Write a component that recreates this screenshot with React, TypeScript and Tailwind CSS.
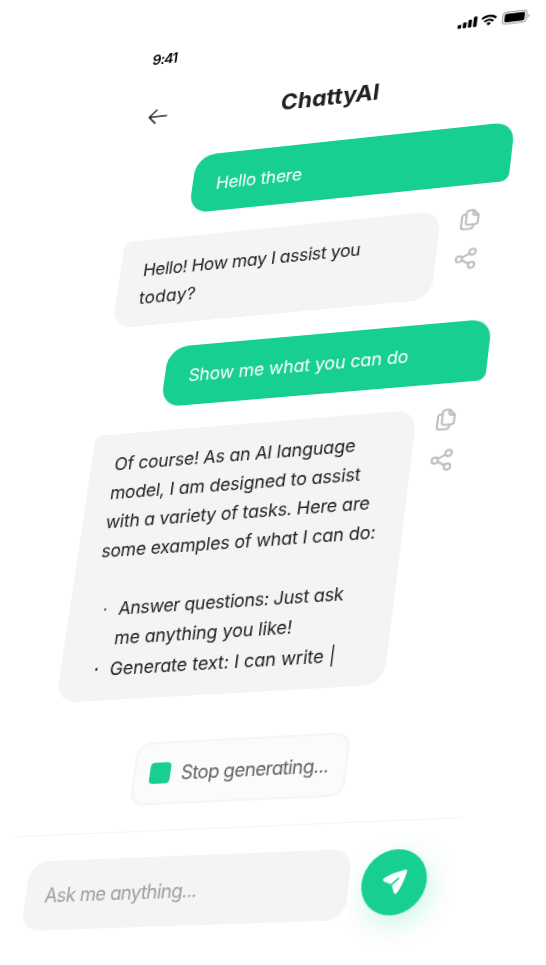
import { useLayoutEffect, useRef, useState, type ReactNode } from "react";

type Point = [number, number];

// Rectangle of the flat screen and the four points it is projected onto.
const AREA = { x: 24, y: 136, w: 380, h: 678 };
const QUAD: [Point, Point, Point, Point] = [
  [136.9, 162],
  [515.3, 121.4],
  [433.9, 819.4],
  [35.6, 836.4],
];

function projection(): string {
  const [[x0, y0], [x1, y1], [x2, y2], [x3, y3]] = QUAD;
  const dx1 = x1 - x2, dx2 = x3 - x2, dx3 = x0 - x1 + x2 - x3;
  const dy1 = y1 - y2, dy2 = y3 - y2, dy3 = y0 - y1 + y2 - y3;
  const den = dx1 * dy2 - dx2 * dy1;
  const g = (dx3 * dy2 - dx2 * dy3) / den;
  const h = (dx1 * dy3 - dx3 * dy1) / den;
  const m = [
    x1 - x0 + g * x1, y1 - y0 + g * y1, 0, g,
    x3 - x0 + h * x3, y3 - y0 + h * y3, 0, h,
    0, 0, 1, 0,
    x0, y0, 0, 1,
  ];
  return `matrix3d(${m.map((n) => n.toFixed(8)).join(",")}) scale(${1 / AREA.w}, ${1 / AREA.h}) translate(${-AREA.x}px, ${-AREA.y}px)`;
}

// One line of text whose tracking is set so that it fills the given width.
function Line({ width, className = "", children }: { width: number; className?: string; children: string }) {
  const ref = useRef<HTMLSpanElement>(null);
  const [spacing, setSpacing] = useState(0);
  useLayoutEffect(() => {
    if (ref.current) setSpacing((width - ref.current.offsetWidth) / children.length);
  }, [width, children]);
  return (
    <span className={`block w-max whitespace-pre ${className}`}>
      <span ref={ref} style={{ letterSpacing: spacing }}>{children}</span>
    </span>
  );
}

function CopyIcon() {
  return (
    <svg className="size-6" viewBox="0 0 24 24" fill="none" stroke="#bdbdbd" strokeWidth="2" strokeLinejoin="round" strokeLinecap="round">
      <path d="M13.500 2.500h-3.500a2.800 2.800 0 0 0-2.800 2.800v9.200a2.800 2.800 0 0 0 2.800 2.800h6a2.800 2.800 0 0 0 2.800-2.800V7.800z" />
      <path d="M13.500 2.700v3a2 2 0 0 0 2 2h3" />
      <path d="M6.800 6.500h-1a2.800 2.800 0 0 0-2.800 2.800v9.400a2.800 2.800 0 0 0 2.800 2.800h6a2.800 2.800 0 0 0 2.800-2.800v-1" />
    </svg>
  );
}

function ShareIcon() {
  return (
    <svg className="size-6" viewBox="0 0 24 24" fill="none" stroke="#bdbdbd" strokeWidth="2" strokeLinecap="round">
      <circle cx="4.800" cy="11.800" r="3" />
      <circle cx="17.200" cy="5.200" r="3" />
      <circle cx="17.200" cy="18.400" r="3" />
      <path d="m7.600 10.400 6.900-3.700M7.600 13.200l6.900 3.800" />
    </svg>
  );
}

function StatusIcons() {
  return (
    <svg className="h-[13.700px] w-[69.500px] overflow-visible" viewBox="0 0 71 14" fill="none">
      <g fill="#000">
        <rect x="-1.500" y="8.500" width="3.600" height="4" rx="1" />
        <rect x="3.700" y="6.500" width="3.600" height="6" rx="1" />
        <rect x="8.900" y="4" width="3.600" height="8.500" rx="1" />
        <rect x="14.100" y="1.300" width="3.600" height="11.200" rx="1" />
      </g>
      <g transform="translate(-1.500 0)">
        <path d="M24 5.200a10.200 10.200 0 0 1 14.400 0" stroke="#000" strokeWidth="2.200" />
        <path d="M26.700 8.200a6.400 6.400 0 0 1 9 0" stroke="#000" strokeWidth="2.200" />
        <path d="M31.200 12.700l-2.300-2.400a3.300 3.300 0 0 1 4.600 0z" fill="#000" />
      </g>
      <rect x="43.500" y=".5" width="24" height="12.800" rx="3.300" stroke="#000" strokeOpacity=".4" />
      <path d="M69 5v4c.9-.4 1.400-1.100 1.400-2S69.900 5.400 69 5z" fill="#000" fillOpacity=".4" />
      <rect x="45.400" y="2.400" width="20.200" height="9" rx="1.500" fill="#000" />
    </svg>
  );
}

function UserMessage({ children }: { children: ReactNode }) {
  return (
    <div className="ml-[62.2px] rounded-[20px] rounded-br-lg bg-[#18cf93] px-6 pt-[16.8px] pb-[15.2px] text-white">{children}</div>
  );
}

function BotMessage({ children }: { children: ReactNode }) {
  return (
    <div className="flex items-start gap-[18px]">
      <div className="w-[318px] rounded-[20px] rounded-tl-lg bg-[#f4f4f4] px-[23.7px] pt-[16.4px] pb-[15.8px]">{children}</div>
      <div className="flex flex-col gap-4">
        <CopyIcon />
        <ShareIcon />
      </div>
    </div>
  );
}

function Bullet({ children }: { children: ReactNode }) {
  return (
    <li className="flex">
      <span className="flex h-[29.200px] w-[25.800px] items-center pt-px pl-[11px]">
        <span className="size-[2.500px] rounded-full bg-[#212121]" />
      </span>
      <div className="leading-[29.200px]">{children}</div>
    </li>
  );
}

export default function App() {
  return (
    <div className="h-[965px] w-[546px] overflow-hidden bg-white">
      <div
        className="flex h-[926px] w-[428px] origin-top-left flex-col font-[Inter,'Open_Sans',sans-serif] text-[17.5px] leading-[29px] text-[#212121] [font-feature-settings:'cv11','calt'_0]"
        style={{ transform: projection() }}
      >
        <div className="flex h-[52px] items-center justify-between pr-[22px] pl-[24.5px]">
          <Line width={25.5} className="text-[14.5px] font-semibold text-black">9:41</Line>
          <StatusIcons />
        </div>

        <header className="grid h-[73px] grid-cols-[48px_1fr_48px] items-center px-[24px]">
          <svg className="ml-[5px] h-[20px] w-[20px]" viewBox="0 0 20 20" fill="none" stroke="#212121" strokeWidth="1.600" strokeLinecap="round" strokeLinejoin="round">
            <path d="M19 10H1M8 3 1 10l7 7" />
          </svg>
          <Line width={99} className="mx-auto pt-px pl-[3px] text-[23px] font-bold">ChattyAI</Line>
        </header>

        <main className="mt-[11px] flex flex-col gap-[24.2px] px-6">
          <UserMessage>
            <Line width={87}>Hello there</Line>
          </UserMessage>
          <BotMessage>
            <Line width={219}>Hello! How may I assist you</Line>
            <Line width={57.5}>today?</Line>
          </BotMessage>
          <UserMessage>
            <Line width={217}>Show me what you can do</Line>
          </UserMessage>
          <BotMessage>
            <Line width={239}>Of course! As an AI language</Line>
            <Line width={247}>model, I am designed to assist</Line>
            <Line width={260}>with a variety of tasks. Here are</Line>
            <Line width={268.5}>some examples of what I can do:</Line>
            <ul className="mt-[29px]">
              <Bullet>
                <Line width={220}>Answer questions: Just ask</Line>
                <Line width={174}>me anything you like!</Line>
              </Bullet>
              <Bullet>
                <Line width={219}>Generate text: I can write |</Line>
              </Bullet>
            </ul>
          </BotMessage>
        </main>

        <button className="mx-auto mt-auto flex h-[60px] w-[205px] items-center gap-[11px] rounded-[14px] border-2 border-[#f4f5f5] bg-[#fafcfb] pl-[14px] text-[18px] text-[#616161]">
          <span className="size-[20px] rounded-[4px] bg-[#18cf93]" />
          <Line width={141}>Stop generating...</Line>
        </button>

        <footer className="mt-[24px] flex h-[113px] shrink-0 items-center gap-3 border-t border-[#f5f5f5] pr-6 pl-[22.5px]">
          <div className="flex h-[65px] flex-1 items-center rounded-[18px] bg-[#f4f4f4] pt-px pl-[19.5px] text-[18px] text-[#9e9e9e]">
            <Line width={147}>Ask me anything...</Line>
          </div>
          <button className="flex size-[60px] items-center justify-center rounded-full bg-[#18cf93] shadow-[4px_8px_24px_rgba(24,207,147,0.22)]">
            <svg className="size-[24px]" viewBox="0 0 26 26">
              <path d="M24.500 1.500c-.3-.6-1-.6-2-.4C14 3 7 5.500 2.600 8.800c-1.400 1.200-.8 2.600.8 3.300l7.500 3 3 8c.7 1.700 2.200 2 3.200.5C20.500 18.500 23.500 10 24.700 3.200z" fill="#fff" />
              <path d="M17 9.300 10 16" stroke="#18cf93" strokeWidth="1.700" strokeLinecap="round" />
            </svg>
          </button>
        </footer>
      </div>
    </div>
  );
}
